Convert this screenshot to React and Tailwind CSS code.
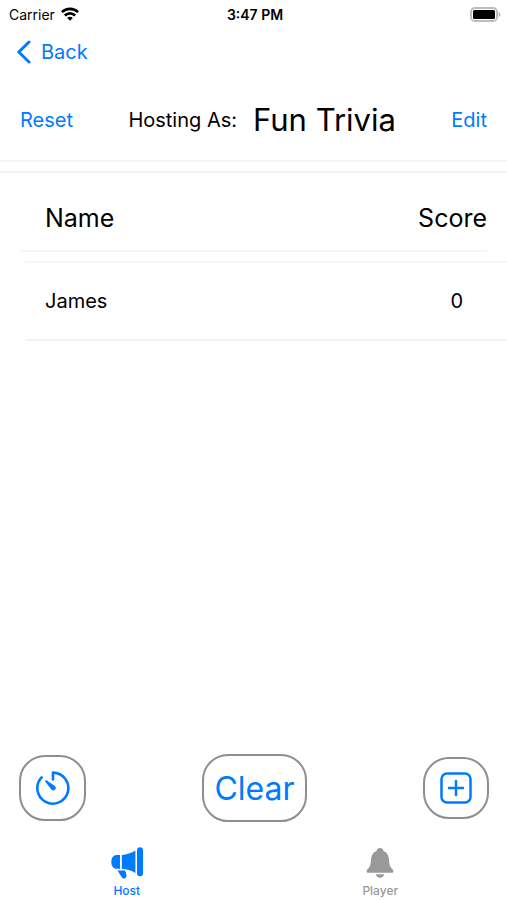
import React, { useState } from 'react'

const players = [
  { name: 'James', score: 0 },
]

const WifiIcon = () => (
  <svg viewBox="0 0 18 14" className="h-[14px] w-[18px]" fill="none" stroke="black" strokeWidth="2.6" aria-hidden="true">
    <path d="M0.9 5.2 C5.4 0.7 12.6 0.7 17.1 5.2" />
    <path d="M3.8 8.5 C6.8 5.6 11.2 5.6 14.2 8.5" />
    <path d="M6.2 10.9 C7.8 9.4 10.2 9.4 11.8 10.9 L9 13.8 Z" fill="black" stroke="none" />
  </svg>
)

const BatteryIcon = () => (
  <svg viewBox="0 0 31 15" className="h-[15px] w-[31px]" aria-hidden="true">
    <rect x="1" y="1" width="26" height="13" rx="4" fill="white" stroke="#bdbdbd" strokeWidth="2" />
    <rect x="3" y="3" width="22" height="9" rx="1.5" fill="black" />
    <path d="M28.6 5 C31 5.8 31 9.2 28.6 10 Z" fill="#b5b5b5" />
  </svg>
)

const TimerIcon = () => (
  <svg viewBox="0 0 34 34" className="size-[34px]" fill="none" stroke="currentColor" strokeWidth="2.6" strokeLinecap="round" strokeLinejoin="round" aria-hidden="true">
    <path d="M17 8.5 V1.6 A15.5 15.5 0 1 1 5.6 6.4" />
    <path d="M9.3 9.6 C9.8 9.1 10.3 9.2 10.8 9.5 L18.9 15.1 C21.4 17.5 18 21.2 15.4 18.6 L9.4 10.9 C9.1 10.4 9 10 9.3 9.6 Z" fill="currentColor" stroke="none" />
  </svg>
)

const PlusIcon = () => (
  <svg viewBox="0 0 32 32" className="size-8" fill="none" stroke="currentColor" strokeWidth="2.5" strokeLinecap="round" aria-hidden="true">
    <rect x="1.5" y="1.5" width="29" height="29" rx="5.5" />
    <path d="M16 9 V23 M9 16 H23" />
  </svg>
)

const MegaphoneIcon = () => (
  <svg viewBox="0 0 32 32" className="size-8" fill="currentColor" aria-hidden="true">
    <path d="M9 8 V21.8 H5.6 C2.2 21.8 0.3 18.6 0.3 14.9 S2.2 8 5.6 8 Z" />
    <path d="M10.8 8 C15.5 7.8 20.5 6.2 24.4 3.6 V26 C20.5 23.6 15.5 22 10.8 21.8 Z" />
    <rect x="26" y="0.3" width="6" height="29" rx="3" />
    <path d="M6.5 23.4 H13.4 C14 23.5 14.5 24 14.7 24.8 L15.5 28.3 C16.2 31.6 12 32.4 10.8 30.2 Z" />
  </svg>
)

const BellIcon = () => (
  <svg viewBox="0 0 28 32" className="h-8 w-7" fill="currentColor" aria-hidden="true">
    <path d="M14 1 C12 1 10.8 2.3 10.5 3.9 C7 5.3 5.2 8.4 5 12.4 C4.8 17.5 4.2 19.2 2.2 21.5 C1.2 22.6 0.6 23.2 0.6 24.2 C0.6 25.2 1.3 25.8 2.4 25.8 H25.6 C26.7 25.8 27.4 25.2 27.4 24.2 C27.4 23.2 26.8 22.6 25.8 21.5 C23.8 19.2 23.2 17.5 23 12.4 C22.8 8.4 21 5.3 17.5 3.9 C17.2 2.3 16 1 14 1 Z" />
    <path d="M9.8 27.3 H18.2 C17.8 29.5 16.2 30.8 14 30.8 S10.2 29.5 9.8 27.3 Z" />
  </svg>
)

const App = () => {

  const [tab, setTab] = useState('host')

  return (
    <div className="flex min-h-screen w-full flex-col bg-white font-['Inter','Liberation_Sans',sans-serif] text-black">
      <div className="grid h-7 grid-cols-3 items-center pl-[9px] pr-[6px]">
        <div className="flex items-center gap-1.5 text-[14px]">
          <span>Carrier</span>
          <WifiIcon />
        </div>
        <span className="text-center text-[14px] font-semibold">3:47 PM</span>
        <div className="flex justify-end"><BatteryIcon /></div>
      </div>

      <nav className="flex h-12 items-center px-4">
        <button type="button" className="flex items-center gap-2.5 text-[20px] text-[#007aff]">
          <svg viewBox="0 0 15 24" className="h-6 w-[15px]" fill="none" stroke="currentColor" strokeWidth="3" strokeLinecap="round" strokeLinejoin="round" aria-hidden="true">
            <path d="M13 2 L2.8 12 L13 22" />
          </svg>
          Back
        </button>
      </nav>

      <header className="flex h-[86px] items-center justify-between border-b-2 border-[#f3f3f3] px-5 pt-1 text-[20px]">
        <button type="button" className="text-[#007aff]">Reset</button>
        <div className="flex items-center gap-4">
          <span>Hosting As:</span>
          <h1 className="text-[31px]">Fun Trivia</h1>
        </div>
        <button type="button" className="text-[#007aff]">Edit</button>
      </header>

      <table className="mt-[9px] block border-t-2 border-[#f3f3f3]">
        <thead className="block px-5">
          <tr className="flex h-[79px] items-center justify-between border-b-2 border-[#f6f6f6] pl-[25px] pt-3.5 text-[25px]">
            <th scope="col" className="font-normal">Name</th>
            <th scope="col" className="font-normal">Score</th>
          </tr>
        </thead>
        <tbody className="mt-[9px] ml-[25px] block border-t-2 border-[#f6f6f6]">
          {players.map(({ name, score }) => (
            <tr key={name} className="flex h-[78px] items-center justify-between border-b-2 border-[#f3f3f3] pl-5 pr-11 text-[20px]">
              <td>{name}</td>
              <td>{score}</td>
            </tr>
          ))}
        </tbody>
      </table>

      <div className="mt-auto flex items-center justify-between pl-[19px] pr-[18px] text-[#007aff]">
        <button type="button" aria-label="Timer" className="flex h-[66px] w-[67px] items-center justify-center rounded-[26px] border-2 border-[#8e8e8e]">
          <TimerIcon />
        </button>
        <button type="button" className="flex h-[68px] w-[105px] items-center justify-center rounded-[26px] border-2 border-[#8e8e8e] pt-0.5 text-[32px]">
          Clear
        </button>
        <button type="button" aria-label="Add player" className="flex h-[62px] w-[66px] items-center justify-center rounded-[26px] border-2 border-[#8e8e8e]">
          <PlusIcon />
        </button>
      </div>

      <div className="mt-[25px] grid grid-cols-2 text-[12px] font-medium">
        <button
          type="button"
          onClick={() => setTab('host')}
          className={`flex flex-col items-center gap-[3px] ${tab === 'host' ? 'text-[#007aff]' : 'text-[#999999]'}`}
        >
          <MegaphoneIcon />
          Host
        </button>
        <button
          type="button"
          onClick={() => setTab('player')}
          className={`flex flex-col items-center gap-[3px] ${tab === 'player' ? 'text-[#007aff]' : 'text-[#999999]'}`}
        >
          <BellIcon />
          Player
        </button>
      </div>
    </div>
  )
}

export default App
